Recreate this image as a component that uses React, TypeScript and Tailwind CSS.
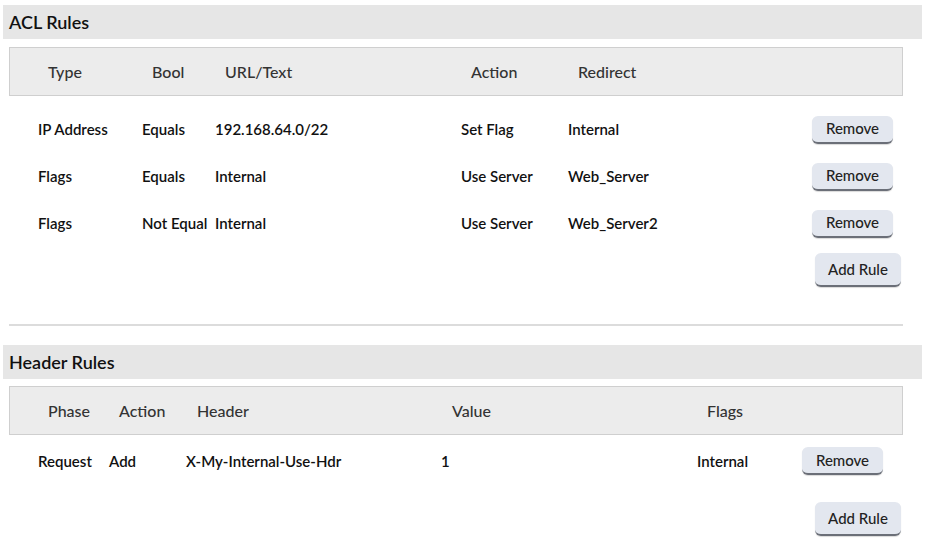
const btn = "rounded-md bg-[#e3e7ef] border-b-2 border-[#6b6f78] text-[15px] text-[#222] font-medium shadow-[0_1px_1px_rgba(0,0,0,0.15)]";

function Title({ t }: { t: string }) {
  return <div className="mx-[3px] w-[919px] h-[34px] bg-[#e6e6e6] flex items-center pl-[6px] text-[18px] font-semibold text-[#111]">{t}</div>;
}

export default function App() {
  const acl = [
    ["IP Address", "Equals", "192.168.64.0/22", "Set Flag", "Internal"],
    ["Flags", "Equals", "Internal", "Use Server", "Web_Server"],
    ["Flags", "Not Equal", "Internal", "Use Server", "Web_Server2"],
  ];
  const w = ["w-[104px]", "w-[73px]", "w-[246px]", "w-[107px]"];
  return (
    <div className="w-[931px] h-[552px] bg-white text-[#111] pt-[5px]" style={{ fontFamily: "Lato, 'Open Sans', sans-serif" }}>
      <Title t="ACL Rules" />
      <div className="ml-[9px] w-[894px]">
        <div className="mt-[8px] h-[49px] bg-[#ececec] border border-[#cfcfcf] flex items-center pl-[38px] text-[16px] font-medium text-[#333]">
          <div className={w[0]}>Type</div><div className={w[1]}>Bool</div><div className={w[2]}>URL/Text</div><div className={w[3]}>Action</div><div>Redirect</div>
        </div>
        <div className="pt-[10px]">
          {acl.map((r, i) => (
            <div key={i} className="h-[47px] flex items-center pl-[29px] text-[15px] font-semibold">
              <div className={w[0]}>{r[0]}</div><div className={w[1]}>{r[1]}</div><div className={w[2]}>{r[2]}</div><div className={w[3]}>{r[3]}</div><div className="flex-1">{r[4]}</div>
              <button className={`${btn} w-[81px] h-[28px] mr-[10px]`}>Remove</button>
            </div>
          ))}
        </div>
        <div className="flex justify-end mt-[6px]">
          <button className={`${btn} w-[86px] h-[34px] mr-[2px]`}>Add Rule</button>
        </div>
        <div className="mt-[37px] h-[2px] bg-[#dcdcdc]" />
      </div>
      <div className="h-[19px]" />
      <Title t="Header Rules" />
      <div className="ml-[9px] w-[894px]">
        <div className="mt-[7px] h-[49px] bg-[#ececec] border border-[#cfcfcf] flex items-center pl-[38px] text-[16px] font-medium text-[#333]">
          <div className="w-[71px]">Phase</div><div className="w-[78px]">Action</div><div className="w-[255px]">Header</div><div className="w-[255px]">Value</div><div>Flags</div>
        </div>
        <div className="pt-[3px]">
          <div className="h-[46px] flex items-center pl-[29px] text-[15px] font-semibold">
            <div className="w-[71px]">Request</div><div className="w-[77px]">Add</div><div className="w-[255px]">X-My-Internal-Use-Hdr</div><div className="w-[256px]">1</div><div className="w-[105px]">Internal</div>
            <button className={`${btn} w-[81px] h-[28px]`}>Remove</button>
          </div>
        </div>
        <div className="flex justify-end mt-[18px]">
          <button className={`${btn} w-[86px] h-[34px] mr-[2px]`}>Add Rule</button>
        </div>
      </div>
    </div>
  );
}
